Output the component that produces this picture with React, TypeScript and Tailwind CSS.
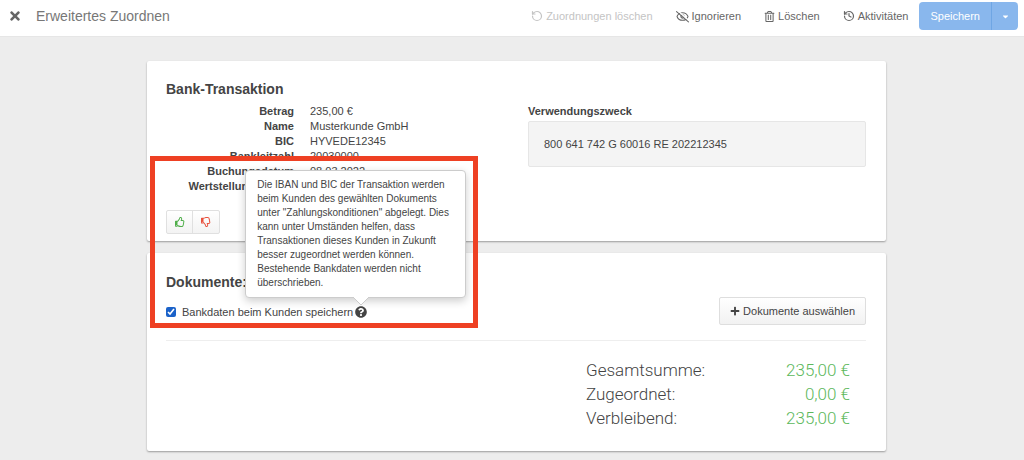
import { FC, ReactNode } from "react";
import {
  FaCaretDown,
  FaPlus,
  FaQuestionCircle,
  FaRegThumbsDown,
  FaRegThumbsUp,
  FaRegTrashAlt,
  FaTimes,
} from "react-icons/fa";
import { Eye, History, RotateCcw } from "lucide-react";

const details = [
  { label: "Betrag", value: "235,00 €" },
  { label: "Name", value: "Musterkunde GmbH" },
  { label: "BIC", value: "HYVEDE12345" },
  { label: "Bankleitzahl", value: "20030000" },
  { label: "Buchungsdatum", value: "08.03.2022" },
  { label: "Wertstellungsdatum", value: "" },
];

const totals = [
  { label: "Gesamtsumme:", value: "235,00 €" },
  { label: "Zugeordnet:", value: "0,00 €" },
  { label: "Verbleibend:", value: "235,00 €" },
];

interface HeaderActionProps {
  icon: ReactNode;
  label: string;
  disabled?: boolean;
}

const HeaderAction: FC<HeaderActionProps> = ({ icon, label, disabled }) => (
  <button
    type="button"
    disabled={disabled}
    className="flex items-center gap-[3px] text-[#666] disabled:text-[#c4c4c4]"
  >
    {icon}
    {label}
  </button>
);

const EyeSlashIcon: FC = () => (
  <span className="relative">
    <Eye size={13} strokeWidth={2} />
    <svg viewBox="0 0 24 24" className="absolute inset-0 size-[13px] overflow-visible">
      <path d="M3 1 24 20" stroke="white" strokeWidth="2.4" />
      <path d="M1 3 23 22" stroke="currentColor" strokeWidth="2" strokeLinecap="round" />
    </svg>
  </span>
);

const Header: FC = () => (
  <header className="flex h-[37px] items-start justify-between border-b border-[#e6e6e6] bg-white pr-1.5 pl-2">
    <div className="flex h-8 items-center gap-3.5">
      <button type="button" aria-label="Schließen" className="text-[#666]">
        <FaTimes size={14} />
      </button>
      <h1 className="text-sm text-[#777]">Erweitertes Zuordnen</h1>
    </div>

    <div className="flex h-8 items-center gap-[23px] text-[11px]">
      <HeaderAction icon={<RotateCcw size={12} strokeWidth={2.4} />} label="Zuordnungen löschen" disabled />
      <HeaderAction icon={<EyeSlashIcon />} label="Ignorieren" />
      <HeaderAction icon={<FaRegTrashAlt size={11} />} label="Löschen" />
      <HeaderAction icon={<History size={12} strokeWidth={2.4} />} label="Aktivitäten" />
      <div className="-ml-3 flex h-7 text-white">
        <button type="button" className="rounded-l bg-[#89b7ed] px-[11px]">
          Speichern
        </button>
        <button
          type="button"
          aria-label="Weitere Optionen"
          className="flex w-[27px] items-center justify-center rounded-r border-l border-[#6fa6e4] bg-[#89b7ed]"
        >
          <FaCaretDown size={9} />
        </button>
      </div>
    </div>
  </header>
);

const Card: FC<{ className?: string; children: ReactNode }> = ({ className, children }) => (
  <section
    className={`relative rounded-xs bg-white pr-5 pl-[19px] shadow-[0_1px_2px_rgba(0,0,0,0.35)] ${className}`}
  >
    {children}
  </section>
);

const Transaction: FC = () => (
  <Card className="pt-[18px] pb-[7px]">
    <h2 className="text-sm leading-5 font-bold">Bank-Transaktion</h2>
    <div className="mt-[5px] grid grid-cols-2 gap-6">
      <div>
        <dl className="grid grid-cols-[128px_1fr] gap-x-4 leading-[15px]">
          {details.map(({ label, value }) => (
            <div key={label} className="contents">
              <dt className="text-right font-bold">{label}</dt>
              <dd>{value}</dd>
            </div>
          ))}
        </dl>
        <div className="mt-4 inline-flex h-6 rounded-xs border border-[#e0e0e0] bg-linear-to-b from-white to-[#f3f3f3]">
          <button
            type="button"
            aria-label="Vorschlag passt"
            className="flex w-[26px] items-center justify-center border-r border-[#e0e0e0] text-[#4fae4a]"
          >
            <FaRegThumbsUp size={10} />
          </button>
          <button
            type="button"
            aria-label="Vorschlag passt nicht"
            className="flex w-[26px] items-center justify-center text-[#e8503c]"
          >
            <FaRegThumbsDown size={10} />
          </button>
        </div>
      </div>
      <div>
        <h3 className="leading-[15px] font-bold">Verwendungszweck</h3>
        <p className="mt-0.5 rounded-xs border border-[#e6e6e6] bg-[#f4f4f4] px-[15px] py-[14px] leading-4">
          800 641 742 G 60016 RE 202212345
        </p>
      </div>
    </div>
  </Card>
);

const BankDataHint: FC = () => (
  <span className="relative">
    <button type="button" aria-label="Hilfe" aria-describedby="bank-data-hint" className="block text-[#444]">
      <FaQuestionCircle size={12} />
    </button>
    <span
      id="bank-data-hint"
      role="tooltip"
      className="absolute bottom-full -left-[110px] z-10 mb-2 w-[221px] rounded border border-[#ccc] bg-white px-[11px] py-[7px] text-[10px] leading-[14px] shadow-[0_3px_8px_rgba(0,0,0,0.2)]"
    >
      Die IBAN und BIC der Transaktion werden beim Kunden des gewählten Dokuments unter
      "Zahlungskonditionen" abgelegt. Dies kann unter Umständen helfen, dass Transaktionen dieses
      Kunden in Zukunft besser zugeordnet werden können. Bestehende Bankdaten werden nicht
      überschrieben.
      <svg viewBox="0 0 16 8" className="absolute top-full left-[107px] h-2 w-4">
        <path d="M0 0 8 8 16 0" fill="white" stroke="#ccc" />
      </svg>
    </span>
  </span>
);

const Documents: FC = () => (
  <Card className="pt-[19px] pb-[21px]">
    <h2 className="text-sm leading-5 font-bold">Dokumente:</h2>
    <div className="mt-[5px] flex items-start justify-between border-b border-[#eee] pb-[15px]">
      <div className="mt-[7px] flex items-center gap-0.5">
        <input id="save-bank-data" type="checkbox" defaultChecked className="mr-1 size-2.5 accent-[#1b62c9]" />
        <label htmlFor="save-bank-data">Bankdaten beim Kunden speichern</label>
        <BankDataHint />
      </div>
      <button
        type="button"
        className="flex h-7 items-center gap-[3px] rounded-xs border border-[#dedede] bg-linear-to-b from-white to-[#f2f2f2] px-[10px]"
      >
        <FaPlus size={10} />
        Dokumente auswählen
      </button>
    </div>

    <dl className="mt-[17px] ml-auto grid w-[280px] grid-cols-[1fr_auto] pr-4 font-['Roboto'] text-[17px] leading-6 font-light">
      {totals.map(({ label, value }) => (
        <div key={label} className="contents">
          <dt>{label}</dt>
          <dd className="text-right text-[#5cb85c]">{value}</dd>
        </div>
      ))}
    </dl>

    {/* Highlight frame */}
    <div className="pointer-events-none absolute -top-[97px] left-[3px] z-20 h-[172px] w-[328px] border-5 border-[#ee4023]" />
  </Card>
);

export default function App() {
  return (
    <div className="min-h-screen bg-[#ededed] font-['Liberation_Sans',Arial,sans-serif] text-[11px] text-[#444]">
      <Header />
      <main className="pt-6 pb-2 pl-[9px]">
        <div className="mx-auto flex max-w-[739px] flex-col gap-3">
          <Transaction />
          <Documents />
        </div>
      </main>
    </div>
  );
}
